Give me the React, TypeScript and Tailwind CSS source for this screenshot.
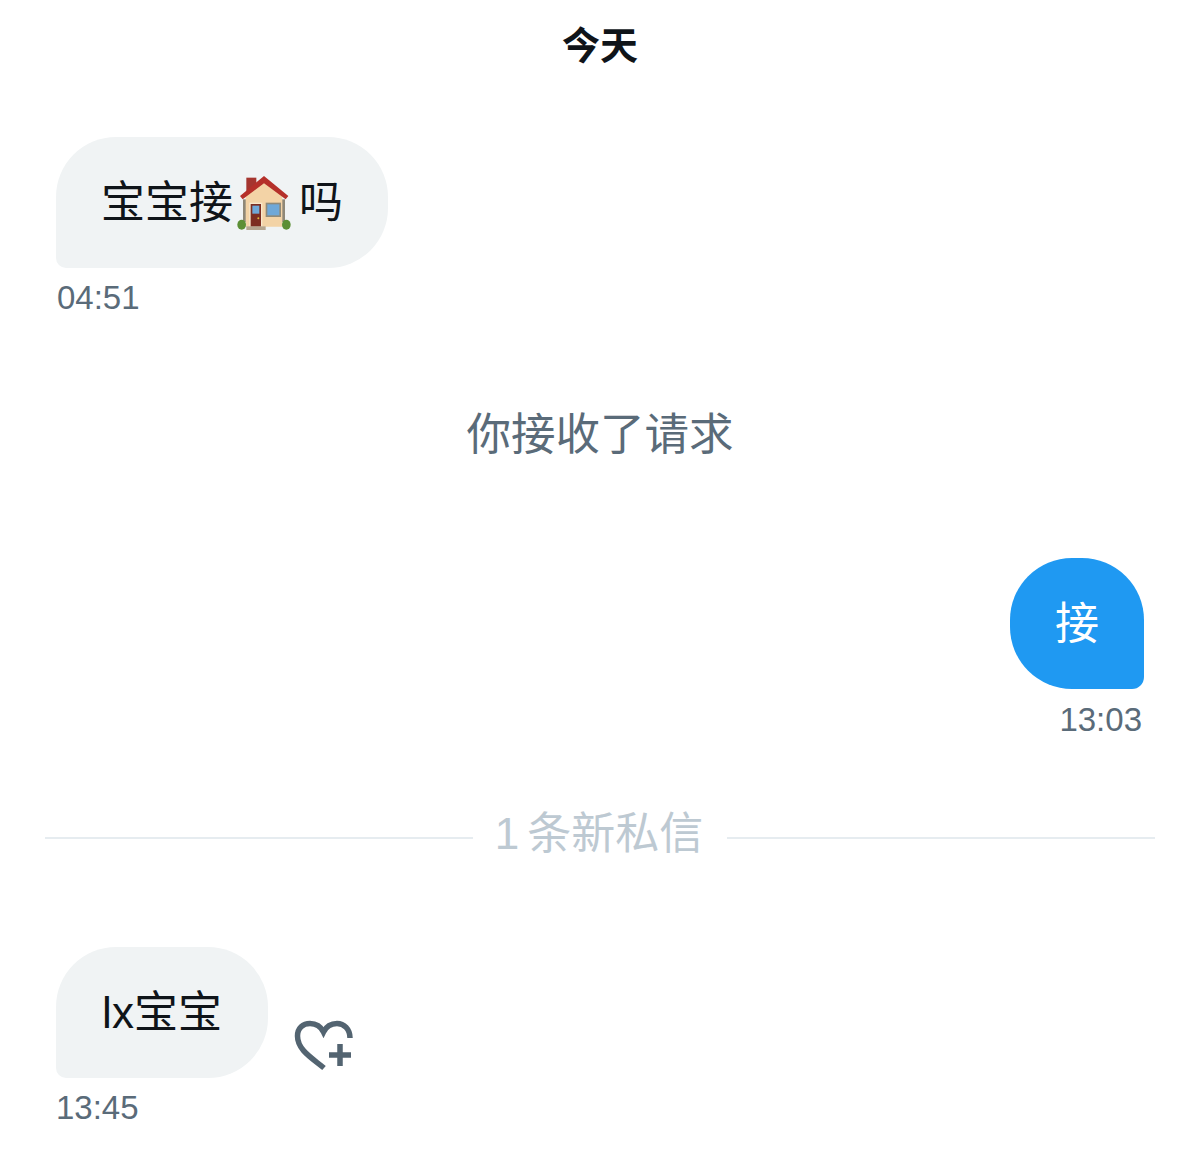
const cjk = "font-['Liberation_Sans','Noto_Sans_CJK_SC',sans-serif]"

function HouseEmoji() {
  return (
    <svg viewBox="12 6 198 210" className="w-[66px] h-[70px] shrink-0">
      <rect x="52" y="35" width="30" height="42" fill="#a5352f" />
      <rect x="42" y="100" width="126" height="68" fill="#8f8878" />
      <path d="M50 88 L105 45 L160 88 V182 H50 Z" fill="#f3d3a6" />
      <path d="M33 90 L105 30 L178 90 L170 100 L105 52 L41 100 Z" fill="#b5302a" />
      <rect x="61" y="110" width="39" height="72" fill="#f8e8cc" />
      <rect x="65" y="114" width="31" height="68" fill="#7d2e22" />
      <rect x="70" y="119" width="21" height="24" fill="#6fa8d8" />
      <circle cx="88" cy="157" r="3" fill="#e6b83c" />
      <rect x="110" y="110" width="46" height="43" fill="#8f8a7a" />
      <rect x="115" y="115" width="36" height="33" fill="#6fa8d8" />
      <rect x="52" y="181" width="58" height="11" fill="#b5a690" />
      <ellipse cx="38" cy="176" rx="13" ry="15" fill="#5c8f35" />
      <ellipse cx="172" cy="176" rx="13" ry="15" fill="#5c8f35" />
    </svg>
  )
}

function HeartPlus() {
  return (
    <svg viewBox="0 0 60 52" fill="none" stroke="#536471" className="w-[60px] h-[52px]">
      <path
        d="M30 48 C18 38 3.5 30 3.5 16 C3.5 8 9 3.5 16 3.5 C22 3.5 27 7 29.5 12 C32 7 37 3.5 43 3.5 C50 3.5 56 9 56 18"
        strokeWidth="5.5"
      />
      <path d="M46 24 V46 M35 35 H57" strokeWidth="5.5" />
    </svg>
  )
}

function Time({ children }: { children: string }) {
  return <div className="h-10 leading-10 text-[33px] text-[#5a6b79]">{children}</div>
}

export default function App() {
  return (
    <div className={`w-[1200px] h-[1167px] bg-white overflow-hidden ${cjk}`}>
      <div className="h-[90px] pt-[2px] flex items-center justify-center text-[38px] font-bold text-[#0f1419]">今天</div>

      {/* Incoming */}
      <div className="mt-[47px] pl-[56px]">
        <div className="w-[332px] h-[131px] flex items-center pl-[45px] bg-[#f0f3f4] rounded-[60px] rounded-bl-[10px] text-[44px] text-[#0f1419]">
          <span>宝宝接</span>
          <HouseEmoji />
          <span>吗</span>
        </div>
        <div className="mt-[10px] pl-px">
          <Time>04:51</Time>
        </div>
      </div>

      {/* System */}
      <div className="mt-[85px] h-[60px] pt-1 flex items-center justify-center text-[44.5px] text-[#5a6b79]">你接收了请求</div>

      {/* Outgoing */}
      <div className="mt-[95px] pr-[56px] flex flex-col items-end">
        <div className="w-[134px] h-[131px] flex items-center justify-center bg-[#1f99f2] rounded-[62px] rounded-br-[12px] text-[44px] text-white">
          接
        </div>
        <div className="mt-[11px] pr-[2px]">
          <Time>13:03</Time>
        </div>
      </div>

      {/* Divider */}
      <div className="mt-[68px] h-[60px] px-[45px] flex items-center">
        <div className="flex-1 h-[2px] bg-[#e6ecf0]" />
        <div className="w-[254px] flex justify-center pb-2 pr-[2px] text-[44px] text-[#bdc9d2]">
          <span>1</span>
          <span className="ml-[8px]">条新私信</span>
        </div>
        <div className="flex-1 h-[2px] bg-[#e6ecf0]" />
      </div>

      {/* Incoming */}
      <div className="mt-[79px] pl-[56px]">
        <div className="flex items-start">
          <div className="w-[212px] h-[131px] flex items-center justify-center bg-[#f0f3f4] rounded-[60px] rounded-bl-[10px] text-[44px] text-[#0f1419]">
            lx宝宝
          </div>
          <div className="ml-[26px] mt-[73px]">
            <HeartPlus />
          </div>
        </div>
        <div className="mt-[10px]">
          <Time>13:45</Time>
        </div>
      </div>
    </div>
  )
}
